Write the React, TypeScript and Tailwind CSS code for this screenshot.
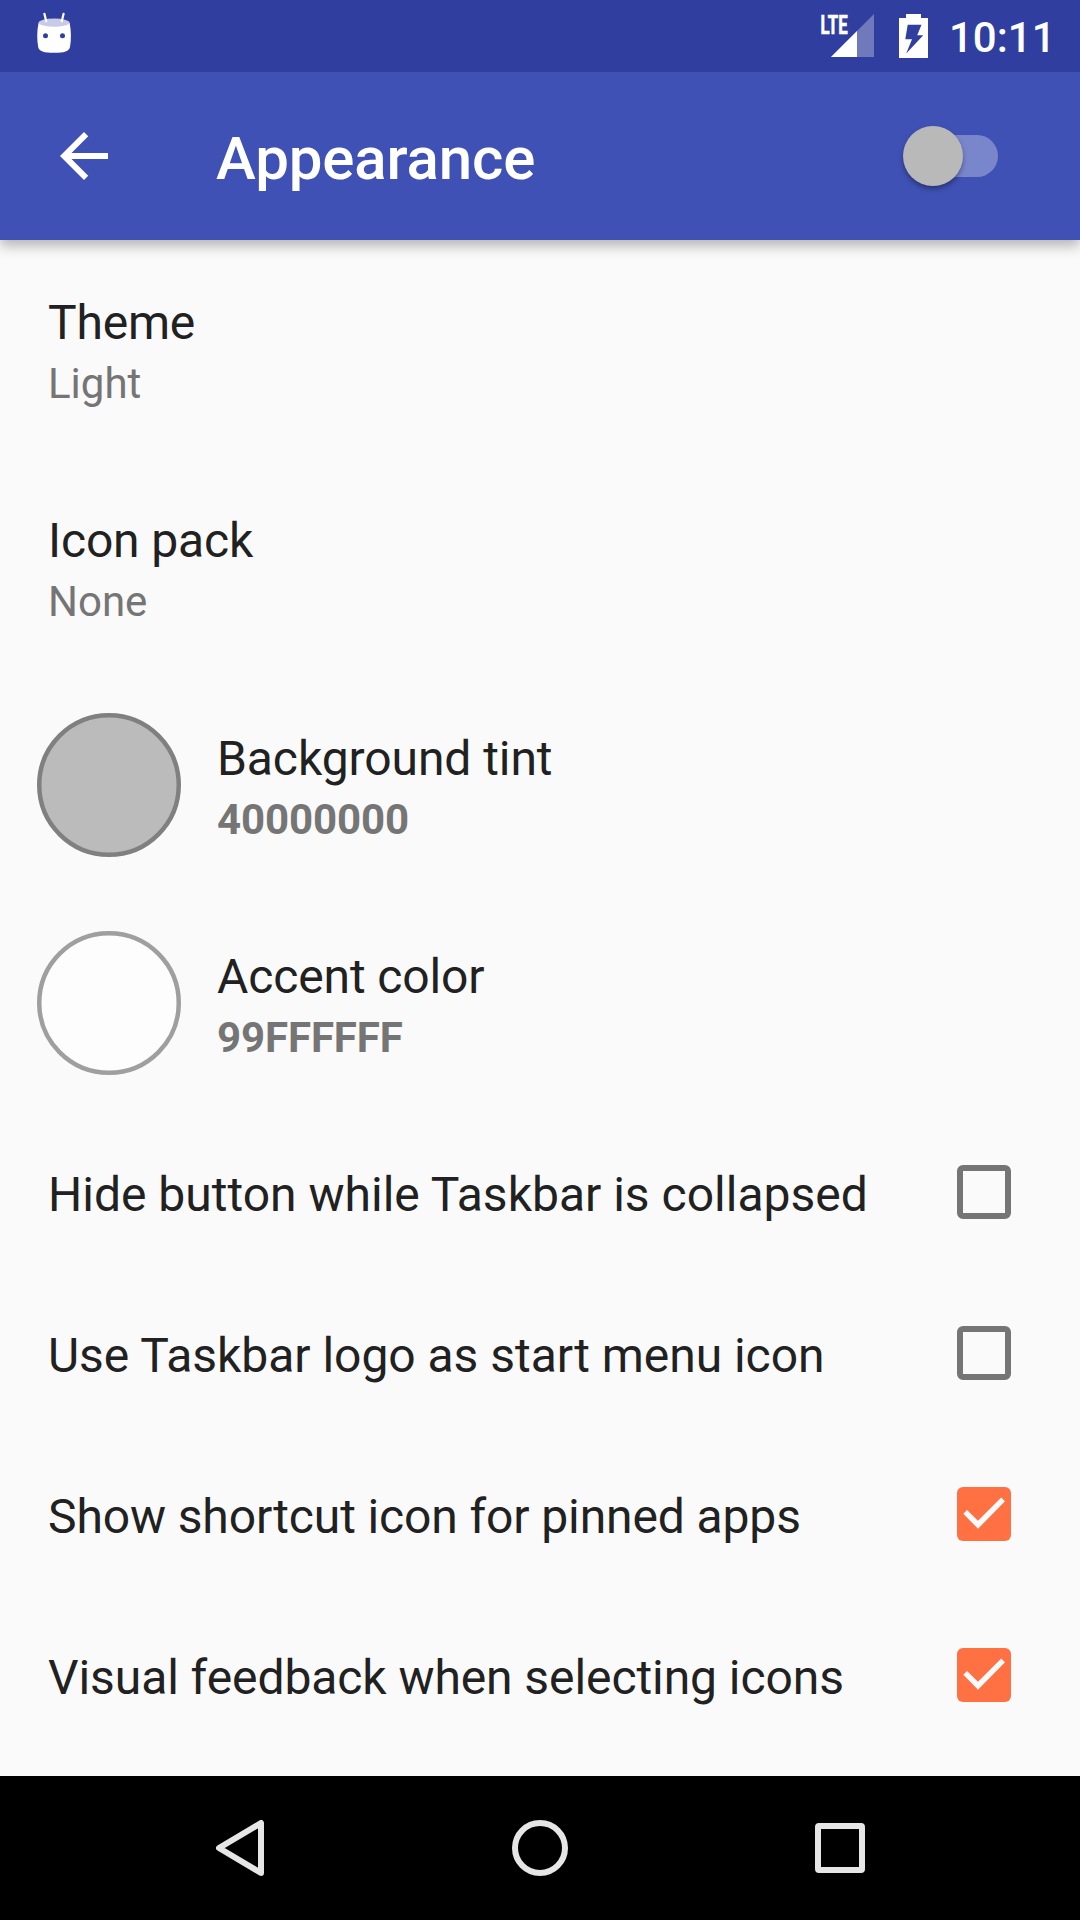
const font = { fontFamily: 'Roboto, sans-serif' };

function Labels({ title, value, bold, spacing = '' }: { title: string; value: string; bold?: boolean; spacing?: string }) {
  return (
    <div className="flex flex-col pt-[55px]">
      <div className={'h-[56px] text-[48px] leading-[56px] text-[#212121] ' + spacing}>{title}</div>
      <div className={'mt-[8px] text-[42px] leading-[49px] text-[#757575] ' + (bold ? 'font-bold tracking-[-0.1px]' : '')}>{value}</div>
    </div>
  );
}

function Pref({ title, value, spacing }: { title: string; value: string; spacing?: string }) {
  return (
    <div className="flex h-[218px] pl-12">
      <Labels title={title} value={value} spacing={spacing} />
    </div>
  );
}

function ColorPref({ title, value, fill, stroke, spacing }: { title: string; value: string; fill: string; stroke: string; spacing?: string }) {
  return (
    <div className="flex h-[218px] gap-9 pl-[37px]">
      <svg className="mt-[37px] size-[144px] shrink-0" viewBox="0 0 144 144">
        <circle cx="72" cy="72" r="69.75" fill={fill} stroke={stroke} strokeWidth="4.5" />
      </svg>
      <Labels title={title} value={value} bold spacing={spacing} />
    </div>
  );
}

function CheckPref({ title, on, spacing = '' }: { title: string; on?: boolean; spacing?: string }) {
  return (
    <div className="flex h-[161px] items-start justify-between pl-12 pr-[69px]">
      <div className={'mt-[55px] text-[48px] leading-[56px] whitespace-nowrap text-[#212121] ' + spacing}>{title}</div>
      {on ? (
        <svg className="mt-[53px] size-[54px]" viewBox="0 0 54 54">
          <rect width="54" height="54" rx="6" fill="#ff7043" />
          <path d="M6.3 26.7L10 23L21 33.8L44.2 10.5L48 14.3L21 41.8Z" fill="#fafafa" />
        </svg>
      ) : (
        <div className="mt-[53px] size-[54px] rounded-[6px] border-[6px] border-[#757575]" />
      )}
    </div>
  );
}

function StatusBar() {
  return (
    <div className="z-20 flex h-[72px] items-start bg-[#303f9f] pl-[36px] text-white">
      <svg className="h-[72px] w-[36px]" viewBox="36 0 36 72">
        <path d="M38.6 22.5C36.8 31 36.9 40 38.2 47C39 51.5 44 52.8 54.2 52.8C64.4 52.8 69 51.5 70 47C71.3 40 71.3 31 69.6 22.5Z" fill="#fff" />
        <ellipse cx="54.1" cy="22.7" rx="15.3" ry="4.1" fill="#c8cbe6" />
        <path d="M44.4 13.8L46.2 21.2M63.6 13.8L61.8 21.2" stroke="#fff" strokeWidth="2.2" strokeLinecap="round" />
        <circle cx="45.5" cy="35.8" r="2.5" fill="#303f9f" />
        <circle cx="62.5" cy="35.8" r="2.5" fill="#303f9f" />
      </svg>
      <svg className="ml-auto h-[72px] w-[56px]" viewBox="820 0 56 72">
        <path d="M831 57L874 14V57Z" fill="#7079bc" />
        <path d="M831 57L857 31V57Z" fill="#fff" />
        <text x="820.6" y="33.5" fontSize="26" fontWeight="700" fill="#fff" stroke="#fff" strokeWidth="0.7" textLength="27" lengthAdjust="spacingAndGlyphs">LTE</text>
      </svg>
      <svg className="ml-[23px] h-[72px] w-[29px]" viewBox="899 0 29 72">
        <path d="M899 18H906V14H921V18H928V58H899Z" fill="#fff" />
        <path d="M907.7 24.7H921.5L917.2 35.3H923.3L906.2 53.5L912 39.3H905.3Z" fill="#303f9f" />
      </svg>
      <div className="mt-[13px] mr-[28px] ml-[21px] w-[103px] text-right text-[42px] leading-[50px] font-medium whitespace-nowrap">10:11</div>
    </div>
  );
}

function AppBar() {
  return (
    <div className="z-10 flex h-[168px] bg-[#3f51b5] pl-[48px] text-white shadow-[0_6px_12px_rgba(0,0,0,0.28)]">
      <svg className="mt-[48px] size-[72px]" viewBox="0 0 24 24" fill="#fff">
        <path d="M20 11H7.83l5.59-5.59L12 4l-8 8 8 8 1.41-1.41L7.83 13H20v-2z" />
      </svg>
      <div className="mt-[52px] ml-[96px] text-[60px] leading-[70px] font-medium tracking-[-0.12px]">Appearance</div>
      <div className="mt-[53px] mr-[82px] ml-auto flex h-[62px] w-[96px] items-center">
        <div className="z-10 ml-[0.5px] size-[60.5px] shrink-0 rounded-full bg-[#b9b9b9] shadow-[0_3px_5px_rgba(0,0,0,0.35)]" />
        <div className="-ml-[31px] h-[42px] w-[66px] rounded-r-full bg-[#7a86cc]" />
      </div>
    </div>
  );
}

function NavBar() {
  return (
    <div className="mt-auto flex h-[144px] items-center bg-black pl-[216px]">
      <svg className="h-[56px] w-[48px]" viewBox="0 0 48 56">
        <path d="M45 3V53L3 28Z" fill="none" stroke="#e6e6e6" strokeWidth="6" strokeLinejoin="round" />
      </svg>
      <div className="ml-[248px] size-[56px] rounded-full border-[6px] border-[#e6e6e6]" />
      <div className="ml-[247px] size-[50px] rounded-[4px] border-[6px] border-[#e6e6e6]" />
    </div>
  );
}

export default function App() {
  return (
    <div className="flex h-[1920px] w-[1080px] flex-col overflow-hidden bg-[#fafafa]" style={font}>
      <StatusBar />
      <AppBar />
      <Pref title="Theme" value="Light" spacing="tracking-[-0.2px]" />
      <Pref title="Icon pack" value="None" spacing="tracking-[-0.15px]" />
      <ColorPref title="Background tint" value="40000000" fill="#bbbbbb" stroke="#808080" spacing="tracking-[-0.08px]" />
      <ColorPref title="Accent color" value="99FFFFFF" fill="#fdfdfd" stroke="#9f9f9f" spacing="tracking-[-0.12px]" />
      <CheckPref title="Hide button while Taskbar is collapsed" />
      <CheckPref title="Use Taskbar logo as start menu icon" spacing="tracking-[-0.03px]" />
      <CheckPref title="Show shortcut icon for pinned apps" on spacing="tracking-[-0.12px]" />
      <CheckPref title="Visual feedback when selecting icons" on spacing="tracking-[-0.08px]" />
      <NavBar />
    </div>
  );
}
